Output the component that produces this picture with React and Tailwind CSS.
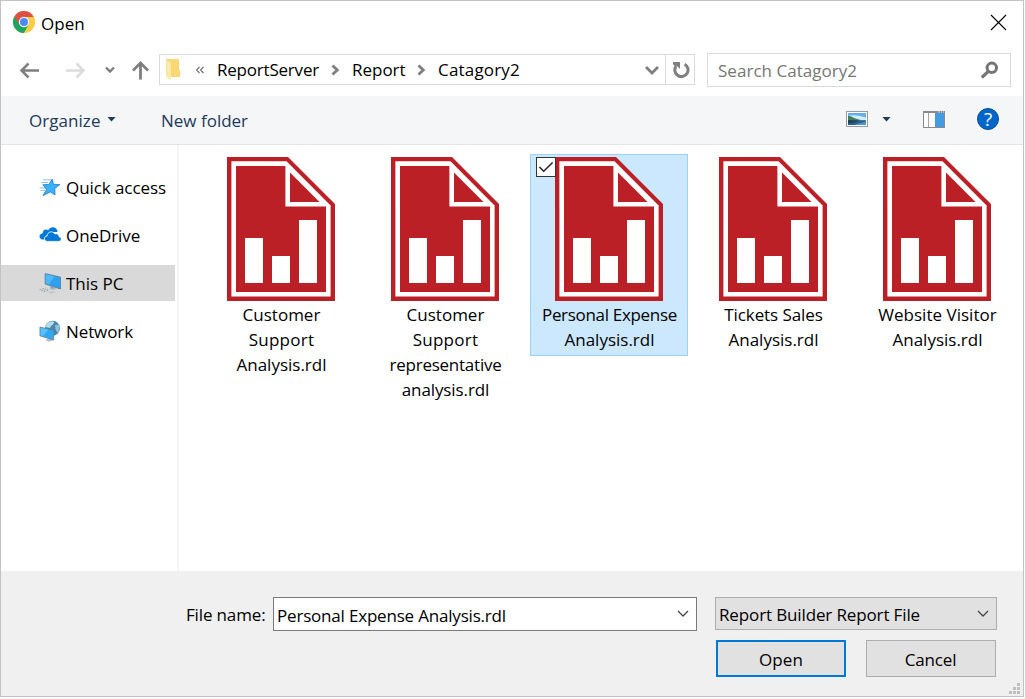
function ChromeLogo() {
  return (
    <svg className="h-[22px] w-[22px] shrink-0" viewBox="0 0 48 48">
      <circle cx="24" cy="24" r="24" fill="#ffcd45" />
      <path d="M24 24 L3.2 12 A24 24 0 0 0 24 48 L34.4 30 Z" fill="#1da462" />
      <path d="M24 13 H45.3 A24 24 0 0 0 3.2 12 L13.6 29.5 Z" fill="#dd5144" />
      <path d="M24 24 L34.4 30 L24 48 A24 24 0 0 0 45.3 13 H24 Z" fill="#ffcd45" />
      <circle cx="24" cy="24" r="11.3" fill="#f4f4f4" />
      <circle cx="24" cy="24" r="8.8" fill="#4c8bf5" />
    </svg>
  );
}

function Arrow({ className = "", d, color = "#7f7f7f", w = 20, h = 20, sw = 2.2 }) {
  return (
    <svg className={"shrink-0 " + className} width={w} height={h} viewBox={`0 0 ${w} ${h}`} fill="none" stroke={color} strokeWidth={sw}>
      <path d={d} />
    </svg>
  );
}

function FolderIcon() {
  return (
    <svg className="ml-[6px] h-[22px] w-[15px] shrink-0" viewBox="0 0 15 22">
      <path d="M0 0 H13 V10.5 L14 11 V18 H3 L0 15 Z" fill="#f5cf68" />
      <path d="M3 0 H13 V10.5 L14 11 V18 H4 Z" fill="#f8d775" />
      <path d="M0 0.5 L5 3.5 V21 L0.5 18.5 Z" fill="#ffe9a6" />
    </svg>
  );
}

function StarIcon() {
  return (
    <svg className="h-[22px] w-[22px] shrink-0" viewBox="0 0 22 22">
      <path d="M4 3.8 H12 M2 6.5 H9 M0.5 12 H7 M1.5 14.6 H6" stroke="#8fc3e8" strokeWidth="1" fill="none" />
      <path d="M13.3 3 L14.4 8.3 L20.8 8.6 L15.8 12.4 L16 19 L11.4 15.9 L4 19.6 L7.6 13.4 L3.8 8.8 L9.8 8.4 Z" fill="#3ab0f5" stroke="#1b7fcb" strokeWidth="0.8" />
    </svg>
  );
}

function CloudIcon() {
  return (
    <svg className="h-[22px] w-[22px] shrink-0" viewBox="0 0 22 22" fill="#0078d7">
      <path d="M3 15.5 C-0.5 14.5 -0.3 9.5 3.6 9.4 C3.6 6 7 4.6 9.2 6.3 C11.4 1.6 18.3 2.6 18.6 8 L12 8 L7 12 L5.6 15.5 Z" />
      <path
        d="M8.4 17.4 C4.6 17.4 4.4 12.4 8 12 C8.4 7.6 13.6 6.4 15.8 9.9 C18.3 9.1 20 10.7 20 12.7 C23.3 13.4 22.7 17.4 20 17.4 Z"
        stroke="#fff"
        strokeWidth="0.8"
      />
    </svg>
  );
}

function PcIcon() {
  return (
    <svg className="h-[22px] w-[22px] shrink-0" viewBox="0 0 22 22">
      <path d="M6.2 1.6 L21.6 5.2 V17 L6.2 12 Z" fill="#2fa0ee" stroke="#54809c" strokeWidth="0.9" />
      <path d="M6.8 2.3 L15.4 4.3 L10 12.5 L6.8 11.6 Z" fill="#50b8fa" />
      <path d="M11.5 14 L15 15 V17 L11.5 16 Z" fill="#8b9aa5" />
      <path d="M10 16.2 L14 15.6 L18 17 L13 18 Z" fill="#a9b5bd" />
      <path d="M0.5 17.6 L7 16 M2 18.8 L9 17.2 M4.5 19.8 L10.5 18.2" stroke="#9da9b2" strokeWidth="1" strokeDasharray="2 1" />
      <path d="M9 20.6 L14 19.2 L17 20 L12 21.6 Z" fill="#b9c2c8" />
    </svg>
  );
}

function NetworkIcon() {
  return (
    <svg className="h-[22px] w-[22px] shrink-0" viewBox="0 0 22 22">
      <circle cx="13.5" cy="8.3" r="7.5" fill="#4a86ab" />
      <path d="M7.5 4 C10 0.9 14 0.7 15 2.3 C15 5 12 5 11 8 L6.5 7 Z" fill="#b4dbec" />
      <path d="M16 5.2 L19.5 4.8 C21.2 8 20.5 11 18.5 13 L16.5 9 Z" fill="#8cc3de" />
      <path d="M9.5 17.4 L13 18.5 L15 20 L10 21.8 L6.5 20.2 Z" fill="#b4bfc6" />
      <path d="M1 7 L14.6 10.6 V19.8 L1 15.8 Z" fill="#2fa8f5" stroke="#5f879f" strokeWidth="0.9" />
      <path d="M1.6 7.7 L9.2 9.7 L4 16 L1.6 15.3 Z" fill="#5cc0fb" />
    </svg>
  );
}

function PictureIcon() {
  return (
    <svg className="h-4 w-[22px] shrink-0" viewBox="0 0 22 16">
      <rect x="0.5" y="0.5" width="21" height="15" fill="#fff" stroke="#9a9a9a" />
      <rect x="2" y="2" width="18" height="12" fill="#64aef0" />
      <path d="M2 5 Q8 3 20 6.5 V10 H2 Z" fill="#d5edfb" />
      <path d="M2 5 Q5 4.5 8 7 Q12 8.5 16 9.3 H2 Z" fill="#3f7f5c" />
      <path d="M2 9.2 H20 V14 H2 Z" fill="#285f94" />
      <path d="M2 9 L14 9.6 L8 11.4 L2 12.4 Z" fill="#1f4550" />
      <path d="M10 13 L20 10.5 V14 H9 Z" fill="#4e93c7" />
    </svg>
  );
}

function PaneIcon() {
  return (
    <svg className="h-[17px] w-[22px] shrink-0" viewBox="0 0 22 17">
      <rect x="0.5" y="0.5" width="21" height="16" fill="#fff" stroke="#8a8a8a" />
      <rect x="0" y="0" width="22" height="2" fill="#8a8a8a" />
      <path d="M15.5 1 H17 M18 1 H19 M20 1 H21" stroke="#e8e8e8" />
      <path d="M5.5 2 V16" stroke="#a8a8a8" />
      <path d="M12 2 H21 V16 H12 Z" fill="#429ce3" />
    </svg>
  );
}

function ReportIcon() {
  return (
    <svg className="block h-[144px] w-[108px] shrink-0" viewBox="0 0 108 144">
      <path d="M0 0 H61 L108 47 V144 H0 Z" fill="#ba2025" />
      <path d="M4.4 4.3 H59.5 L103.6 48.4 V139.6 H4.4 Z" fill="#fff" />
      <path d="M9 9 H58.4 V49.6 H99 V135 H9 Z" fill="#ba2025" />
      <path d="M63 15.5 L92.5 45 H63 Z" fill="#ba2025" />
      <path d="M18 81 H36 V126 H18 Z M45 99 H63 V126 H45 Z M72 63 H90 V126 H72 Z" fill="#fff" />
    </svg>
  );
}

const places = [
  { label: "Quick access", Icon: StarIcon, track: "tracking-[-0.08px]" },
  { label: "OneDrive", Icon: CloudIcon, track: "tracking-[-0.08px]" },
  { label: "This PC", Icon: PcIcon, track: "tracking-[0px]", active: true },
  { label: "Network", Icon: NetworkIcon, track: "tracking-[-0.1px]" },
];

const files = [
  [["Customer", "tracking-[0px]"], ["Support", "tracking-[0.25px]"], ["Analysis.rdl", "tracking-[0px]"]],
  [["Customer", "tracking-[0px]"], ["Support", "tracking-[0.25px]"], ["representative", "tracking-[-0.24px]"], ["analysis.rdl", "tracking-[-0.1px]"]],
  [["Personal Expense", "tracking-[-0.31px]"], ["Analysis.rdl", "tracking-[0px]"]],
  [["Tickets Sales", "tracking-[-0.08px]"], ["Analysis.rdl", "tracking-[0px]"]],
  [["Website Visitor", "tracking-[0.02px]"], ["Analysis.rdl", "tracking-[0px]"]],
];

function FileItem({ lines, selected }) {
  return (
    <div
      className={
        "relative flex w-[158px] flex-col items-center self-start border pt-[2px] pb-[3px] " +
        (selected ? "border-[#99d1ff] bg-[#cce8ff]" : "border-transparent")
      }
    >
      <ReportIcon />
      {selected && (
        <div className="absolute top-[2px] left-[5px] h-5 w-5 border border-[#333] bg-white">
          <svg className="h-[18px] w-[18px]" viewBox="0 0 18 18" fill="none" stroke="#222" strokeWidth="1.5">
            <path d="M2.5 9 L6.7 13.3 L15.6 4.5" />
          </svg>
        </div>
      )}
      <div className="mt-[1px] pl-[1px] text-center">
        {lines.map(([text, track]) => (
          <div key={text} className={"h-[25px] leading-[25px] whitespace-nowrap " + track}>
            {text}
          </div>
        ))}
      </div>
    </div>
  );
}

export default function App() {
  return (
    <div className="h-[699px] w-[1025px] overflow-hidden bg-[#fbfbfb] font-['Open_Sans',sans-serif] text-[17px] text-black">
      <div className="flex h-[697px] w-[1024px] flex-col border border-[#c3c3c3] bg-white">
        <div className="flex h-[45px] shrink-0 items-center justify-between pr-4 pl-3">
          <div className="flex items-center gap-[6px]">
            <div className="mb-[3px]">
              <ChromeLogo />
            </div>
            <span className="leading-6 tracking-[0.05px]">Open</span>
          </div>
          <Arrow className="mb-[2px]" w={17} h={17} color="#000" sw={1.1} d="M1 1 L16 16 M16 1 L1 16" />
        </div>

        <div className="flex h-[50px] shrink-0 items-start">
          <div className="flex h-[50px] w-[158px] items-center pb-[2px]">
            <Arrow className="ml-[18px]" w={22} h={18} sw={2.5} d="M20 9.5 H2 M9.5 2.5 L2.5 9.5 L9.5 16.5" />
            <Arrow className="ml-6" w={22} h={18} sw={2.5} color="#dcdcdc" d="M1 9.5 H19 M11.5 2.5 L18.5 9.5 L11.5 16.5" />
            <Arrow className="ml-[18px]" w={10} h={8} sw={2.4} d="M1 1.5 L5 5.5 L9 1.5" />
            <Arrow className="ml-[17px]" w={18} h={20} sw={2.8} d="M8.5 19.5 V3 M1 10.5 L8.5 3 L16 10.5" />
          </div>
          <div className="mt-2 flex h-[31px] w-[536px] items-center border border-[#d9d9d9]">
            <FolderIcon />
            <Arrow className="ml-[14px]" w={10} h={8} sw={1.1} color="#6a6a6a" d="M4.5 1 L1.5 4 L4.5 7 M8.5 1 L5.5 4 L8.5 7" />
            <span className="ml-3 w-[102px] whitespace-nowrap tracking-[-0.21px]">ReportServer</span>
            <Arrow className="ml-[12px]" w={9} h={12} sw={2.8} d="M1.5 1.5 L6.3 6 L1.5 10.5" />
            <span className="ml-3 w-[54px] whitespace-nowrap tracking-[-0.02px]">Report</span>
            <Arrow className="ml-[11px]" w={9} h={12} sw={2.8} d="M1.5 1.5 L6.3 6 L1.5 10.5" />
            <span className="ml-3 whitespace-nowrap tracking-[0.18px]">Catagory2</span>
            <Arrow className="mr-[6px] ml-auto" w={14} h={10} sw={2.8} d="M1 2 L7 8 L13 2" />
            <div className="flex h-full w-[29px] items-center justify-center border-l border-[#d9d9d9] pl-[1px]">
              <svg className="h-[18px] w-[18px]" viewBox="0 0 18 18" fill="none" stroke="#7f7f7f" strokeWidth="3">
                <path d="M12.6 3.2 A6.6 6.6 0 1 1 3.9 5.4" />
                <path d="M1 1 H8 V8 L5.6 5.6 L3.4 5.6 L1 3.2 Z" fill="#7f7f7f" stroke="none" />
              </svg>
            </div>
          </div>
          <div className="mt-[7px] ml-3 flex h-[34px] w-[304px] items-center justify-between border border-[#d9d9d9] pr-3 pl-[10px]">
            <span className="pt-[2px] tracking-[0.03px] text-[#767676]">Search Catagory2</span>
            <svg className="h-[18px] w-[18px]" viewBox="0 0 18 18" fill="none" stroke="#757575">
              <circle cx="11.8" cy="6.8" r="4.7" strokeWidth="3" />
              <path d="M8 10.7 L1.8 16.5" strokeWidth="3.2" />
            </svg>
          </div>
        </div>

        <div className="flex h-[49px] shrink-0 items-center border-b border-[#e5e5e5] bg-[#f4f6f8] text-[#1e395b]">
          <span className="ml-7 w-[72px] pt-[2px] tracking-[0.05px]">Organize</span>
          <svg className="mb-[2px] ml-[6px] h-[5px] w-[9px]" viewBox="0 0 9 5">
            <path d="M0.5 0 H8.5 L4.5 4.5 Z" fill="#1e395b" />
          </svg>
          <span className="ml-[45px] pt-[2px] tracking-[0px]">New folder</span>
          <div className="mr-6 mb-[2px] ml-auto flex items-center">
            <PictureIcon />
            <svg className="ml-[14px] h-[5px] w-[9px]" viewBox="0 0 9 5">
              <path d="M0.5 0 H8.5 L4.5 4.5 Z" fill="#1e395b" />
            </svg>
            <div className="ml-8 flex">
              <PaneIcon />
            </div>
            <div className="ml-8 flex h-[22px] w-[22px] items-center justify-center rounded-full border border-[#004d96] bg-[#0066cc] text-[19px] leading-none text-white">
              ?
            </div>
          </div>
        </div>

        <div className="flex min-h-0 flex-1">
          <div className="flex w-[176px] shrink-0 flex-col gap-3 pt-[24px]">
            {places.map(({ label, Icon, track, active }) => (
              <div key={label} className={"flex h-9 w-[174px] shrink-0 items-center gap-[5px] pl-[38px] " + (active ? "bg-[#d9d9d9]" : "")}>
                <Icon />
                <span className={"pt-[2px] whitespace-nowrap " + track}>{label}</span>
              </div>
            ))}
          </div>
          <div className="w-[2px] shrink-0 bg-[#f5f5f5]" />
          <div className="flex gap-[6px] pt-[9px] pl-[23px]">
            {files.map((lines, i) => (
              <FileItem key={i} lines={lines} selected={i === 2} />
            ))}
          </div>
        </div>

        <div className="flex h-[125px] shrink-0 items-start bg-[#f0f0f0] pt-[26px]">
          <span className="ml-[185px] w-[80px] leading-[35px] whitespace-nowrap tracking-[-0.15px]">File name:</span>
          <div className="ml-[7px] flex h-[34px] w-[424px] items-center justify-between border border-[#7a7a7a] bg-white pr-[7px] pl-[3px]">
            <span className="pt-[3px] whitespace-nowrap tracking-[-0.19px]">Personal Expense Analysis.rdl</span>
            <Arrow w={12} h={8} sw={1.3} color="#444" d="M1 1 L6 6 L11 1" />
          </div>
          <div className="ml-[18px] w-[282px]">
            <div className="flex h-[33px] items-center justify-between border border-[#adadad] bg-[#e1e1e1] pr-[7px] pl-[3px]">
              <span className="pt-[3px] whitespace-nowrap tracking-[-0.13px]">Report Builder Report File</span>
              <Arrow w={12} h={8} sw={1.3} color="#444" d="M1 1 L6 6 L11 1" />
            </div>
            <div className="mt-[10px] ml-px flex gap-5">
              <div className="flex h-[37px] w-[130px] items-center justify-center border-2 border-[#0078d7] bg-[#e1e1e1] pt-[2px] tracking-[0.05px]">Open</div>
              <div className="flex h-[37px] w-[130px] items-center justify-center border border-[#adadad] bg-[#e1e1e1] pt-[2px] pr-[1px] tracking-[-0.15px]">Cancel</div>
            </div>
          </div>
          <svg className="mt-auto mr-[2px] mb-[1px] ml-auto h-[12px] w-[12px]" viewBox="0 0 12 12" fill="#bfbfbf">
            <path d="M8 0 H11 V3 H8 Z M4 4 H7 V7 H4 Z M8 4 H11 V7 H8 Z M0 8 H3 V11 H0 Z M4 8 H7 V11 H4 Z M8 8 H11 V11 H8 Z" />
          </svg>
        </div>
      </div>
    </div>
  );
}
